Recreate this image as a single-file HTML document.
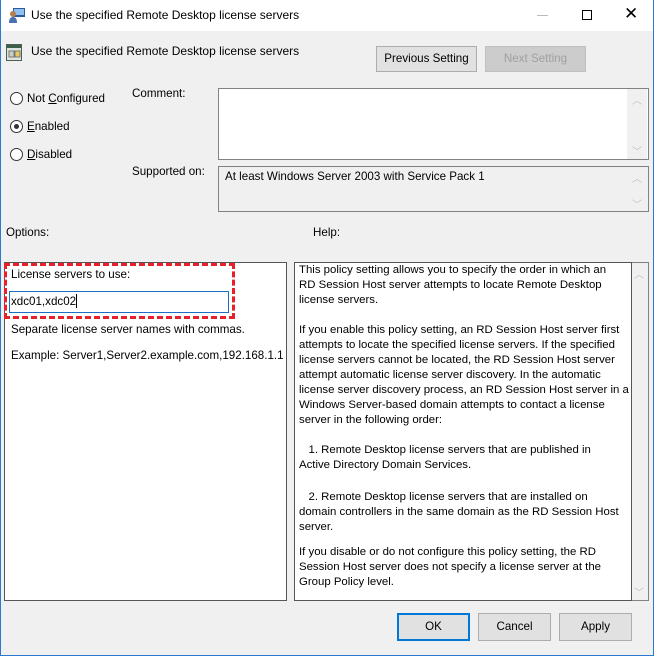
<!DOCTYPE html>
<html><head><style>
*{margin:0;padding:0;box-sizing:border-box}
body{width:654px;height:656px;background:#f0f0f0;font-family:"Liberation Sans",sans-serif;font-size:11.6px;color:#000;position:relative;overflow:hidden}
.a{position:absolute;white-space:nowrap}
.btn{position:absolute;background:#e1e1e1;border:1px solid #adadad;text-align:center;line-height:23px}
.rad{position:absolute;width:13px;height:13px;border:1px solid #333;border-radius:50%;background:#fff}
.sb{position:absolute;color:#c0c0c0;font-size:10px}
</style></head><body>
<div class="a" style="left:0;top:0;width:654px;height:656px;border:1px solid #2b79d0;border-top:none"></div>
<div class="a" style="left:1px;top:0;width:652px;height:31px;background:#fff"></div>
<svg class="a" style="left:8px;top:7px" width="18" height="17"><rect x="5" y="1" width="12" height="9" fill="#2c5aa0"/><rect x="6" y="2" width="10" height="6" fill="#8ec0ee"/><circle cx="5" cy="7" r="3" fill="#b08050"/><path d="M1 16 Q1 10 5 10 Q9 10 9 16Z" fill="#4a70b0"/></svg>
<div class="a" style="left:31px;top:8px;font-size:12px">Use the specified Remote Desktop license servers</div>
<div class="a" style="left:537px;top:15px;width:11px;height:1px;background:#bbb"></div>
<div class="a" style="left:582px;top:10px;width:10px;height:10px;border:1px solid #000"></div>
<div class="a" style="left:624px;top:4px;font-size:17px;font-weight:300">✕</div>

<svg class="a" style="left:6px;top:44px" width="16" height="17"><rect x="0.5" y="0.5" width="15" height="16" fill="#dde4dd" stroke="#506050"/><rect x="1" y="1" width="14" height="3" fill="#3b5f4a"/><rect x="3" y="7" width="5" height="6" fill="#c9d1c9" stroke="#777"/><rect x="9" y="7" width="5" height="6" fill="#e8c860" stroke="#777"/></svg>
<div class="a" style="left:31px;top:44px;font-size:12px">Use the specified Remote Desktop license servers</div>
<div class="btn" style="left:376px;top:46px;width:101px;height:26px">Previous Setting</div>
<div class="btn" style="left:485px;top:46px;width:101px;height:26px;background:#ccc;border-color:#bfbfbf;color:#a0a0a0">Next Setting</div>

<div class="rad" style="left:10px;top:92px"></div>
<div class="a" style="left:27px;top:92px">Not <u>C</u>onfigured</div>
<div class="rad" style="left:10px;top:120px"></div><div class="a" style="left:14px;top:124px;width:5px;height:5px;border-radius:50%;background:#333"></div>
<div class="a" style="left:27px;top:120px"><u>E</u>nabled</div>
<div class="rad" style="left:10px;top:148px"></div>
<div class="a" style="left:27px;top:148px"><u>D</u>isabled</div>

<div class="a" style="left:132px;top:87px">Comment:</div>
<div class="a" style="left:218px;top:88px;width:431px;height:72px;background:#fff;border:1px solid #828282"></div>
<div class="a" style="left:627px;top:89px;width:20px;height:70px;background:#f0f0f0"></div>
<div class="sb" style="left:632px;top:92px">︿</div><div class="sb" style="left:632px;top:143px">﹀</div>
<div class="a" style="left:132px;top:165px">Supported on:</div>
<div class="a" style="left:218px;top:166px;width:431px;height:46px;border:1px solid #828282"></div>
<div class="a" style="left:225px;top:170px">At least Windows Server 2003 with Service Pack 1</div>
<div class="sb" style="left:632px;top:170px">︿</div><div class="sb" style="left:632px;top:196px">﹀</div>

<div class="a" style="left:6px;top:226px">Options:</div>
<div class="a" style="left:313px;top:226px">Help:</div>

<div class="a" style="left:4px;top:262px;width:283px;height:339px;background:#fff;border:1px solid #555"></div>
<div class="a" style="left:4px;top:263px;width:231px;height:56px;border:3px dashed #e8202a"></div>
<div class="a" style="left:11px;top:268px">License servers to use:</div>
<div class="a" style="left:9px;top:291px;width:220px;height:22px;border:1px solid #1a6fc0;background:#fff"></div>
<div class="a" style="left:11px;top:294px">xdc01,xdc02<span style="display:inline-block;width:1px;height:14px;background:#000;vertical-align:-3px"></span></div>
<div class="a" style="left:11px;top:323px">Separate license server names with commas.</div>
<div class="a" style="left:11px;top:349px">Example: Server1,Server2.example.com,192.168.1.1</div>

<div class="a" style="left:294px;top:262px;width:355px;height:339px;background:#f0f0f0;border:1px solid #828282;border-left:none"></div>
<div class="a" style="left:294px;top:262px;width:338px;height:339px;background:#fff;border:1px solid #555"></div>
<div class="sb" style="left:634px;top:266px">︿</div><div class="sb" style="left:634px;top:584px">﹀</div>
<div class="a" style="left:299px;top:263px;line-height:15px;font-size:11.4px">This policy setting allows you to specify the order in which an<br>RD Session Host server attempts to locate Remote Desktop<br>license servers.<br><br>If you enable this policy setting, an RD Session Host server first<br>attempts to locate the specified license servers. If the specified<br>license servers cannot be located, the RD Session Host server<br>attempt automatic license server discovery. In the automatic<br>license server discovery process, an RD Session Host server in a<br>Windows Server-based domain attempts to contact a license<br>server in the following order:<br><br>&nbsp;&nbsp;&nbsp;1. Remote Desktop license servers that are published in<br>Active Directory Domain Services.</div>
<div class="a" style="left:299px;top:490px;line-height:15px;font-size:11.4px">&nbsp;&nbsp;&nbsp;2. Remote Desktop license servers that are installed on<br>domain controllers in the same domain as the RD Session Host<br>server.</div>
<div class="a" style="left:299px;top:545px;line-height:15px;font-size:11.4px">If you disable or do not configure this policy setting, the RD<br>Session Host server does not specify a license server at the<br>Group Policy level.</div>

<div class="btn" style="left:397px;top:613px;width:73px;height:28px;border:2px solid #0078d7;line-height:24px">OK</div>
<div class="btn" style="left:478px;top:613px;width:73px;height:28px;line-height:26px">Cancel</div>
<div class="btn" style="left:559px;top:613px;width:73px;height:28px;line-height:26px">Apply</div>
</body></html>
